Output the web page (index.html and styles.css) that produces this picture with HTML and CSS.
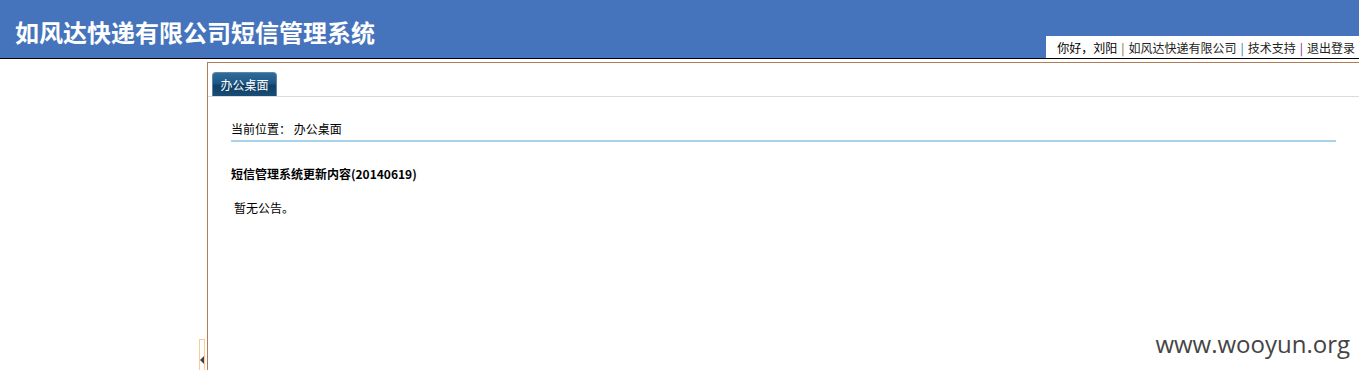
FILE: index.html
```html
<!DOCTYPE html>
<html lang="zh-CN">
<head>
    <meta charset="UTF-8">
    <title>如风达快递有限公司短信管理系统</title>
    <link rel="stylesheet" href="styles.css">
</head>
<body>
    <div class="header">
        <h1 class="logo">如风达快递有限公司短信管理系统</h1>
        <div class="userbar">
            <span>你好，刘阳</span>
            <i class="sep sep-1">|</i>
            <a href="#">如风达快递有限公司</a>
            <i class="sep sep-2">|</i>
            <a href="#">技术支持</a>
            <i class="sep sep-3">|</i>
            <a href="#">退出登录</a>
        </div>
    </div>

    <div class="layout">
        <div class="sidebar">
            <div class="toggle"><span class="arrow"></span></div>
        </div>

        <div class="main">
            <div class="tabs">
                <div class="tab">办公桌面</div>
            </div>
            <div class="content">
                <div class="crumb">当前位置： 办公桌面</div>
                <h3 class="notice-title">短信管理系统更新内容(20140619)</h3>
                <p class="notice-body">暂无公告。</p>
            </div>
        </div>
    </div>

    <div class="watermark">www.wooyun.org</div>
</body>
</html>
```

FILE: styles.css
```css
* {
    margin: 0;
    padding: 0;
    box-sizing: border-box;
}

body {
    font-family: "Noto Sans CJK SC", "Liberation Sans", sans-serif;
    font-size: 12px;
    color: #000;
    background: #fff;
    height: 370px;
    overflow: hidden;
    display: flex;
    flex-direction: column;
}

/* 头部 */
.header {
    height: 59px;
    background: #4574bc;
    border-bottom: 1px solid #000;
    display: flex;
    justify-content: space-between;
    align-items: flex-start;
}

.logo {
    color: #fff;
    font-size: 24px;
    font-weight: bold;
    line-height: 24px;
    margin: 20px 0 0 15px;
}

.userbar {
    align-self: flex-end;
    background: #fff;
    height: 22px;
    width: 313px;
    padding: 0 4px 0 10px;
    display: flex;
    align-items: center;
    justify-content: flex-end;
    gap: 4px;
    white-space: nowrap;
}

.userbar a {
    color: #222;
    text-decoration: none;
}

.sep {
    font-style: normal;
}

.sep-1 { color: #7a5a3a; }
.sep-2 { color: #1a78c2; }
.sep-3 { color: #8a1a8a; }

/* 主体 */
.layout {
    flex: 1;
    display: flex;
    margin-top: 3px;
}

.sidebar {
    width: 207px;
    display: flex;
    justify-content: flex-end;
    align-items: flex-end;
}

.toggle {
    width: 6px;
    height: 31px;
    margin-right: 2px;
    border: 1px solid #ffc992;
    border-bottom: none;
    display: flex;
    align-items: flex-end;
    padding-bottom: 6px;
}

.arrow {
    width: 0;
    height: 0;
    border-top: 4px solid transparent;
    border-bottom: 4px solid transparent;
    border-right: 4px solid #444;
}

.main {
    flex: 1;
    border-left: 1px solid #b07d58;
    border-top: 1px solid #b07d58;
}

.tabs {
    height: 34px;
    padding: 9px 0 0 4px;
    border-bottom: 1px solid #dcdcdc;
}

.tab {
    width: 65px;
    height: 24px;
    line-height: 24px;
    text-align: center;
    color: #fff;
    border-radius: 4px 4px 0 0;
    border: 1px solid #5c86a8;
    border-bottom: none;
    background: linear-gradient(#2e6c9c 0%, #1e5785 45%, #0f3f66 55%, #1a4c75 100%);
}

.content {
    padding: 0 23px;
}

.crumb {
    height: 45px;
    line-height: 20px;
    padding-top: 22px;
    border-bottom: 2px solid #a9d3ea;
}

.notice-title {
    font-size: 12px;
    font-weight: bold;
    margin-top: 24px;
    line-height: 16px;
}

.notice-body {
    margin-top: 18px;
    padding-left: 3px;
    line-height: 16px;
}

/* 水印 */
.watermark {
    position: absolute;
    right: 9px;
    top: 327px;
    font-family: "Open Sans", sans-serif;
    font-size: 24px;
    color: #444;
}
```
